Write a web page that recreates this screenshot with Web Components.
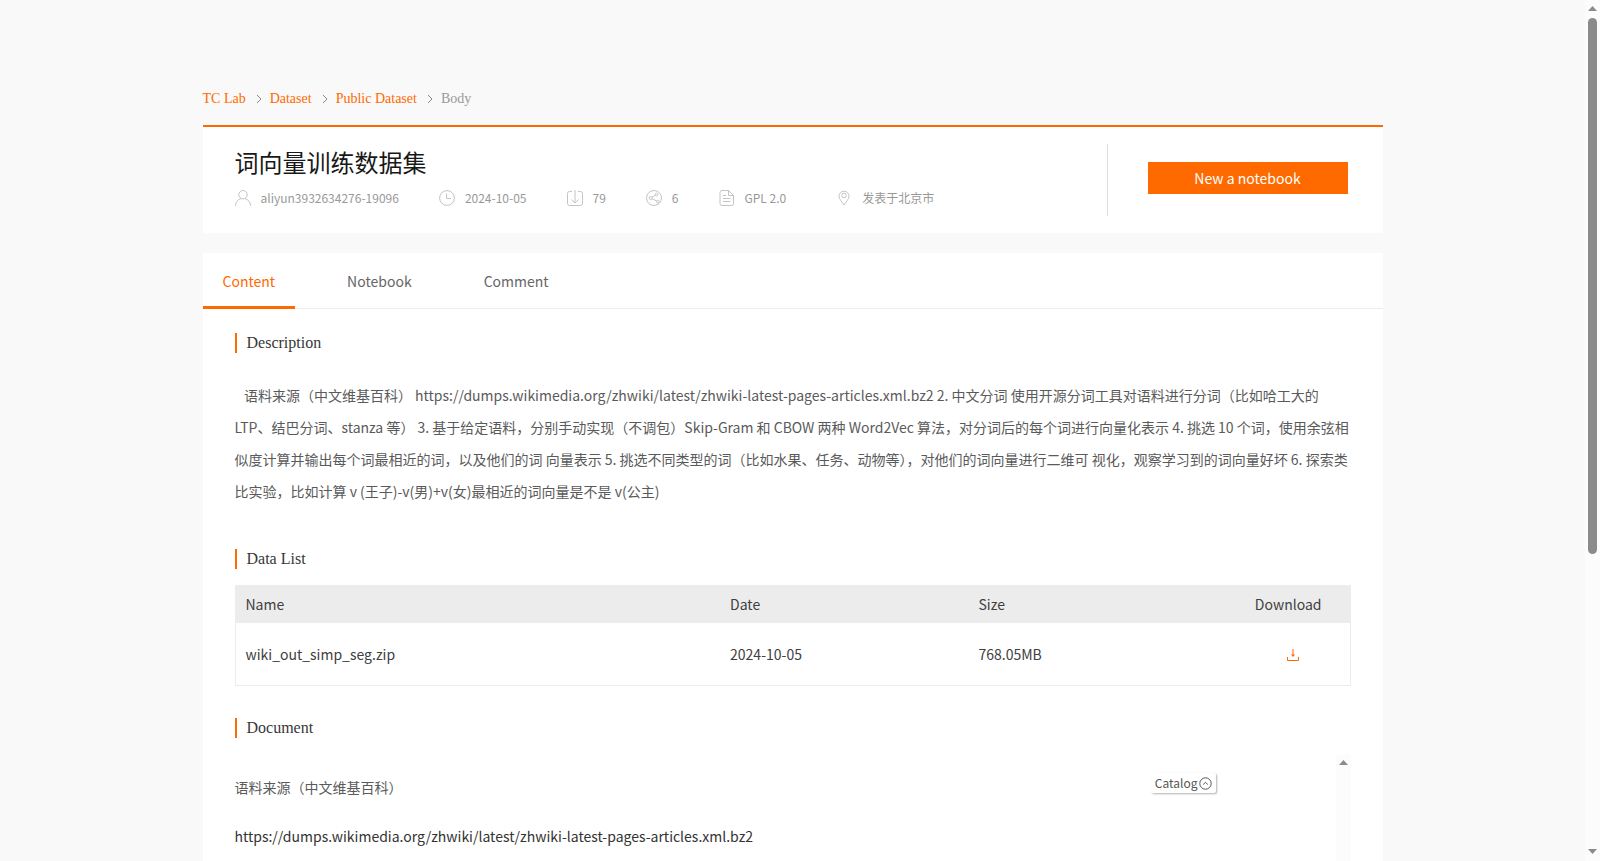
<!DOCTYPE html>
<html lang="zh-CN">
<head>
<meta charset="utf-8">
<title>词向量训练数据集</title>
<style>
  :root {
    --accent: #ff6a00;
    --line: #ececec;
    --page: #f9f9f9;
  }

  body {
    margin: 0;
    height: 100vh;
    overflow: hidden;
    display: flex;
    background: var(--page);
    color: #373d41;
    font: 14px/20px "Noto Sans CJK SC", sans-serif;
  }

  main {
    flex: 1;
    min-width: 0;
    box-sizing: border-box;
    padding-top: 84px;
    overflow: hidden;
  }

  .container {
    max-width: 1180px;
    margin: 0 auto;
  }
</style>
</head>
<body>
  <main>
    <div class="container">
      <bread-crumb>
        <a href="#lab">TC Lab</a>
        <a href="#dataset">Dataset</a>
        <a href="#public">Public Dataset</a>
        <span>Body</span>
      </bread-crumb>

      <dataset-header>
        <span slot="title">词向量训练数据集</span>
        <meta-item icon="user">aliyun3932634276-19096</meta-item>
        <meta-item icon="clock">2024-10-05</meta-item>
        <meta-item icon="download">79</meta-item>
        <meta-item icon="share">6</meta-item>
        <meta-item icon="file">GPL 2.0</meta-item>
        <meta-item icon="pin">发表于北京市</meta-item>
        <span slot="action">New a notebook</span>
      </dataset-header>

      <tab-panel tabs="Content,Notebook,Comment">
        <content-section heading="Description">
          <dataset-description>&nbsp; &nbsp;语料来源（中文维基百科） https://dumps.wikimedia.org/zhwiki/latest/zhwiki-latest-pages-articles.xml.bz2 2. 中文分词 使用开源分词工具对语料进行分词（比如哈工大的 LTP、结巴分词、stanza 等） 3. 基于给定语料，分别手动实现（不调包）Skip-Gram 和 CBOW 两种 Word2Vec 算法，对分词后的每个词进行向量化表示 4. 挑选 10 个词，使用余弦相似度计算并输出每个词最相近的词，以及他们的词 向量表示 5. 挑选不同类型的词（比如水果、任务、动物等），对他们的词向量进行二维可 视化，观察学习到的词向量好坏 6. 探索类比实验，比如计算 v (王子)-v(男)+v(女)最相近的词向量是不是 v(公主)</dataset-description>
        </content-section>
        <content-section heading="Data List">
          <file-table></file-table>
        </content-section>
        <content-section heading="Document">
          <document-view>
            <p>语料来源（中文维基百科）</p>
            <p class="url">https://dumps.wikimedia.org/zhwiki/latest/zhwiki-latest-pages-articles.xml.bz2</p>
          </document-view>
        </content-section>
      </tab-panel>
    </div>
  </main>
  <scroll-bar thumb></scroll-bar>

<script>
class BreadCrumb extends HTMLElement {
  constructor() {
    super();
    this.attachShadow({ mode: "open" });
  }

  connectedCallback() {
    const chevron = `
      <svg width="6" height="10" viewBox="0 0 6 10" fill="none" stroke="#888" aria-hidden="true">
        <path d="M1 1l4 4-4 4" />
      </svg>`;
    const items = [...this.children].map((el, i) => {
      el.slot = `item-${i}`;
      return `<slot name="item-${i}"></slot>`;
    });

    this.shadowRoot.innerHTML = `
      <style>
        :host { display: block; margin-bottom: 11px; }
        nav {
          display: flex;
          align-items: center;
          line-height: 30px;
          font-family: "Liberation Serif", serif;
          color: #999;
        }
        svg { margin: 0 8px 0 10px; }
        ::slotted(a) { color: var(--accent); text-decoration: none; }
      </style>
      <nav aria-label="Breadcrumb">${items.join(chevron)}</nav>
    `;
  }
}

class MetaItem extends HTMLElement {
  static icons = {
    user: `<circle cx="8" cy="4.7" r="4.2" /><path d="M.5 16v-.5C.5 12 3 9.500 6 8.600M10 8.600c3 .9 5.500 3.400 5.500 6.900v.5" />`,
    clock: `<circle cx="8" cy="8" r="7.4" /><path d="M7.500 3.500v5h4.500" />`,
    download: `<path d="M5 1.500H2.500a2 2 0 0 0-2 2v10a2 2 0 0 0 2 2h11a2 2 0 0 0 2-2v-10a2 2 0 0 0-2-2H11M8 0v13M4.500 9.500L8 13l3.500-3.500" />`,
    share: `<circle cx="8" cy="8" r="7.500" /><circle cx="4.700" cy="8" r="1.500" /><circle cx="10.500" cy="4.500" r="1.300" /><circle cx="11.800" cy="11.600" r="1.300" /><path d="M6 7.200l3.500-2M6 8.700l4.600 2.300" />`,
    file: `<path d="M9.500.5H3a2 2 0 0 0-2 2v11a2 2 0 0 0 2 2h9.500a2 2 0 0 0 2-2V5.500zM9.500.5v5h5M4 5.500h3M4 8.500h7.500M4 11.500h7.500" />`,
    pin: `<path d="M8 15C6 12 3 9 3 6.200a5 5 0 0 1 10 0C13 9 10 12 8 15z" /><circle cx="8" cy="5.500" r="2.300" />`
  };

  constructor() {
    super();
    this.attachShadow({ mode: "open" });
  }

  connectedCallback() {
    this.shadowRoot.innerHTML = `
      <style>
        :host {
          display: flex;
          align-items: center;
          gap: 10px;
          font-size: 12px;
          line-height: 18px;
          color: #999;
          white-space: nowrap;
        }
        :host([icon="pin"]) { margin-left: 10px; }
        svg { flex: none; }
      </style>
      <svg width="16" height="16" viewBox="0 0 16 16" fill="none" stroke="#c4c4c4" aria-hidden="true">
        ${MetaItem.icons[this.getAttribute("icon")]}
      </svg>
      <slot></slot>
    `;
  }
}

class DatasetHeader extends HTMLElement {
  constructor() {
    super();
    this.attachShadow({ mode: "open" });
  }

  connectedCallback() {
    this.shadowRoot.innerHTML = `
      <style>
        :host {
          display: flex;
          align-items: flex-start;
          padding: 17px 35px 17px 32px;
          border-top: 2px solid var(--accent);
          background: #fff;
          margin-bottom: 20px;
        }
        .info { flex: 1; min-width: 0; }
        h1 {
          margin: 0 0 9px;
          font-size: 24px;
          font-weight: 400;
          line-height: 36px;
          color: #181818;
        }
        .meta { display: flex; flex-wrap: wrap; gap: 8px 40px; }
        .action {
          height: 72px;
          padding: 18px 0 0 40px;
          box-sizing: border-box;
          border-left: 1px solid #ddd;
        }
        button {
          width: 200px;
          height: 32px;
          padding: 0;
          border: 0;
          background: var(--accent);
          color: #fff;
          font: inherit;
          cursor: pointer;
        }
      </style>
      <div class="info">
        <h1><slot name="title"></slot></h1>
        <div class="meta"><slot></slot></div>
      </div>
      <div class="action">
        <button type="button"><slot name="action"></slot></button>
      </div>
    `;
  }
}

class TabPanel extends HTMLElement {
  constructor() {
    super();
    this.attachShadow({ mode: "open" });
  }

  connectedCallback() {
    const tabs = this.getAttribute("tabs").split(",");

    this.shadowRoot.innerHTML = `
      <style>
        :host { display: block; background: #fff; }
        .tabs {
          display: flex;
          gap: 32px;
          border-bottom: 1px solid var(--line);
        }
        button {
          height: 56px;
          margin-bottom: -1px;
          padding: 3px 20px 0;
          border: 0;
          border-bottom: 3px solid transparent;
          background: none;
          color: #666;
          font: inherit;
          cursor: pointer;
        }
        button[aria-selected="true"] {
          color: var(--accent);
          border-color: var(--accent);
        }
        .body { padding: 24px 32px; }
      </style>
      <div class="tabs" role="tablist">
        ${tabs.map((t, i) => `<button type="button" role="tab" aria-selected="${i === 0}">${t}</button>`).join("")}
      </div>
      <div class="body" role="tabpanel"><slot></slot></div>
    `;

    const buttons = this.shadowRoot.querySelectorAll("button");
    buttons.forEach((b) => b.addEventListener("click", () => {
      buttons.forEach((o) => o.setAttribute("aria-selected", o === b));
    }));
  }
}

class ContentSection extends HTMLElement {
  constructor() {
    super();
    this.attachShadow({ mode: "open" });
  }

  connectedCallback() {
    this.shadowRoot.innerHTML = `
      <style>
        :host { display: block; }
        h2 {
          margin: 0 0 16px;
          padding-left: 10px;
          border-left: 2px solid var(--accent);
          font: 16px/20px "Liberation Serif", serif;
          color: #373737;
        }
      </style>
      <h2>${this.getAttribute("heading")}</h2>
      <slot></slot>
    `;
  }
}

class DatasetDescription extends HTMLElement {
  constructor() {
    super();
    this.attachShadow({ mode: "open" });
  }

  connectedCallback() {
    this.shadowRoot.innerHTML = `
      <style>
        :host { display: block; padding: 10px 0 42px; }
        p { margin: 0; line-height: 32px; color: #5a5a5a; }
      </style>
      <p><slot></slot></p>
    `;
  }
}

class FileTable extends HTMLElement {
  files = [{ name: "wiki_out_simp_seg.zip", date: "2024-10-05", size: "768.05MB" }];

  constructor() {
    super();
    this.attachShadow({ mode: "open" });
  }

  connectedCallback() {
    this.shadowRoot.innerHTML = `
      <style>
        :host { display: block; padding-bottom: 32px; }
        table {
          width: 100%;
          table-layout: fixed;
          border-collapse: separate;
          border-spacing: 0;
          border: 1px solid var(--line);
          color: #404040;
        }
        th, td { padding: 0 0 0 10px; text-align: left; font-weight: 400; }
        th { height: 35px; padding-bottom: 2px; background: #ececec; }
        td { height: 62px; }
        .name { width: 42.6%; }
        .date, .size { width: 21.4%; }
        .action { text-align: center; }
        td.action { height: 60px; padding: 0 0 2px 20px; }
        a { display: inline-block; vertical-align: middle; color: var(--accent); }
        svg { display: block; }
      </style>
      <table>
        <thead>
          <tr>
            <th class="name">Name</th>
            <th class="date">Date</th>
            <th class="size">Size</th>
            <th class="action">Download</th>
          </tr>
        </thead>
        <tbody>
          ${this.files.map((f) => `
            <tr>
              <td>${f.name}</td>
              <td>${f.date}</td>
              <td>${f.size}</td>
              <td class="action">
                <a href="#download" aria-label="Download ${f.name}">
                  <svg width="12" height="12" viewBox="0 0 12 12" fill="none" stroke="currentColor">
                    <path d="M.5 8v3.500h11V8M6 0v7" />
                    <path d="M4 5.500h4L6 8z" fill="currentColor" stroke="none" />
                  </svg>
                </a>
              </td>
            </tr>`).join("")}
        </tbody>
      </table>
    `;
  }
}

class DocumentView extends HTMLElement {
  constructor() {
    super();
    this.attachShadow({ mode: "open" });
  }

  connectedCallback() {
    this.shadowRoot.innerHTML = `
      <style>
        :host { display: flex; align-items: flex-start; height: 480px; }
        .text { flex: 1; min-width: 0; padding-top: 17px; }
        ::slotted(p) { margin: 0 0 17px; line-height: 32px; color: #5a5a5a; }
        ::slotted(p.url) { color: #333; }
        button {
          display: flex;
          align-items: center;
          gap: 1px;
          height: 20px;
          margin: 19px 120px 0 0;
          padding: 0 4px;
          border: 0;
          border-radius: 2px;
          background: #fff;
          box-shadow: 1px 1px 2px rgba(0, 0, 0, .3);
          color: #555;
          font: inherit;
          font-size: 12px;
          cursor: pointer;
        }
        scroll-bar { height: 100%; }
      </style>
      <div class="text"><slot></slot></div>
      <button type="button">Catalog
        <svg width="13" height="13" viewBox="0 0 13 13" fill="none" stroke="currentColor" aria-hidden="true">
          <circle cx="6.500" cy="6.500" r="5.700" /><path d="M4.200 7.500l2.300-2.200 2.300 2.200" />
        </svg>
      </button>
      <scroll-bar></scroll-bar>
    `;
  }
}

class ScrollBar extends HTMLElement {
  constructor() {
    super();
    this.attachShadow({ mode: "open" });
  }

  connectedCallback() {
    this.shadowRoot.innerHTML = `
      <style>
        :host {
          display: flex;
          flex: none;
          flex-direction: column;
          align-items: center;
          box-sizing: border-box;
          width: 15px;
          padding: 6px 0 7px;
          background: #fcfcfc;
        }
        svg { flex: none; fill: #8b8b8b; }
        .track { flex: 1; width: 9px; margin: 7px 0; }
        .thumb { height: 65%; border-radius: 5px; background: #8b8b8b; }
      </style>
      <svg width="9" height="5" viewBox="0 0 9 5"><path d="M0 5L4.500 0 9 5z" /></svg>
      <div class="track">${this.hasAttribute("thumb") ? `<div class="thumb"></div>` : ""}</div>
      <svg width="9" height="5" viewBox="0 0 9 5"><path d="M0 0l4.500 5L9 0z" /></svg>
    `;
  }
}

customElements.define("bread-crumb", BreadCrumb);
customElements.define("meta-item", MetaItem);
customElements.define("dataset-header", DatasetHeader);
customElements.define("tab-panel", TabPanel);
customElements.define("content-section", ContentSection);
customElements.define("dataset-description", DatasetDescription);
customElements.define("file-table", FileTable);
customElements.define("document-view", DocumentView);
customElements.define("scroll-bar", ScrollBar);
</script>
</body>
</html>
